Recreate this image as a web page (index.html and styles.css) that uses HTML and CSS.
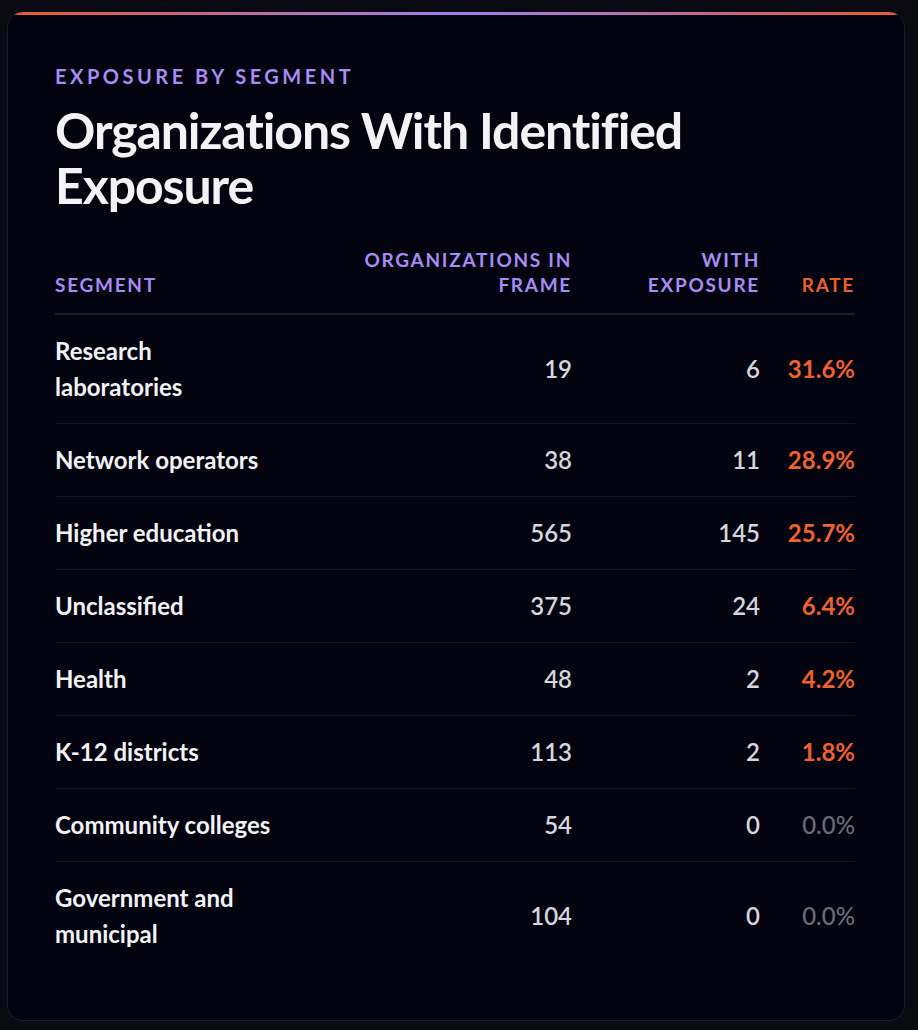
FILE: index.html
```html
<!DOCTYPE html>
<html lang="en">
<head>
<meta charset="utf-8">
<title>Organizations With Identified Exposure</title>
<link rel="stylesheet" href="styles.css">
</head>
<body>
<section class="card">
  <p class="eyebrow">Exposure by Segment</p>
  <h1 class="title">Organizations With Identified Exposure</h1>
  <table class="seg-table">
    <colgroup>
      <col class="c-seg">
      <col class="c-org">
      <col class="c-exp">
      <col class="c-rate">
    </colgroup>
    <thead>
      <tr>
        <th class="th-seg">Segment</th>
        <th class="num">Organizations in frame</th>
        <th class="num">With exposure</th>
        <th class="num th-rate">Rate</th>
      </tr>
    </thead>
    <tbody>
      <tr><td class="seg">Research laboratories</td><td class="num">19</td><td class="num">6</td><td class="num rate">31.6%</td></tr>
      <tr><td class="seg">Network operators</td><td class="num">38</td><td class="num">11</td><td class="num rate">28.9%</td></tr>
      <tr><td class="seg">Higher education</td><td class="num">565</td><td class="num">145</td><td class="num rate">25.7%</td></tr>
      <tr><td class="seg">Unclassified</td><td class="num">375</td><td class="num">24</td><td class="num rate">6.4%</td></tr>
      <tr><td class="seg">Health</td><td class="num">48</td><td class="num">2</td><td class="num rate">4.2%</td></tr>
      <tr><td class="seg">K-12 districts</td><td class="num">113</td><td class="num">2</td><td class="num rate">1.8%</td></tr>
      <tr><td class="seg">Community colleges</td><td class="num">54</td><td class="num">0</td><td class="num rate zero">0.0%</td></tr>
      <tr><td class="seg">Government and municipal</td><td class="num">104</td><td class="num">0</td><td class="num rate zero">0.0%</td></tr>
    </tbody>
  </table>
</section>
</body>
</html>
```

FILE: styles.css
```css
html, body {
  margin: 0;
  background: #0a0a12;
}

body {
  padding: 12px 13px 11px 7px;
  font-family: Lato, "Noto Sans", sans-serif;
  color: #f1f1f4;
}

.card {
  box-sizing: border-box;
  width: 898px;
  border: 1px solid #161a3c;
  border-top: 0;
  border-radius: 16px;
  background:
    linear-gradient(90deg, #e9592b 0%, #c06a9a 25%, #a07ef2 50%, #c06a9a 75%, #e9592b 100%) top left / 100% 3px no-repeat,
    #03040f;
  padding: 52px 48px 50px 47px;
}

.eyebrow {
  margin: 0;
  font-size: 20px;
  line-height: 24px;
  font-weight: 700;
  letter-spacing: 0.175em;
  text-transform: uppercase;
  color: #a98bf4;
}

.title {
  margin: 15px 0 0;
  font-size: 50px;
  line-height: 55px;
  font-weight: 700;
  letter-spacing: -0.022em;
  color: #f3f3f5;
}

.seg-table {
  margin-top: 34px;
  width: 800px;
  border-collapse: collapse;
  table-layout: fixed;
}

.c-seg { width: 235px; }
.c-org { width: 282px; }
.c-exp { width: 188px; }
.c-rate { width: 95px; }

.seg-table th {
  padding: 0 0 16px;
  font-size: 19px;
  line-height: 25px;
  font-weight: 700;
  letter-spacing: 0.09em;
  text-transform: uppercase;
  color: #a98bf4;
  vertical-align: bottom;
  text-align: left;
  border-bottom: 2px solid #1c1b35;
}

.seg-table th.num {
  text-align: right;
  padding-left: 24px;
}

.seg-table th.th-rate {
  color: #e8602c;
}

.seg-table td {
  padding: 18px 0;
  font-size: 24px;
  line-height: 36px;
  vertical-align: middle;
  border-bottom: 1px solid #14142a;
}

.seg-table tbody tr:last-child td {
  border-bottom: 0;
}

.seg-table td.seg {
  padding-right: 15px;
  font-weight: 700;
  color: #f2f2f5;
}

.seg-table td.num {
  padding-left: 24px;
  text-align: right;
  font-weight: 600;
  color: #d6d6de;
}

.seg-table td.rate {
  font-weight: 700;
  color: #f0622d;
}

.seg-table td.rate.zero {
  font-weight: 500;
  color: #6c6c7e;
}
```
